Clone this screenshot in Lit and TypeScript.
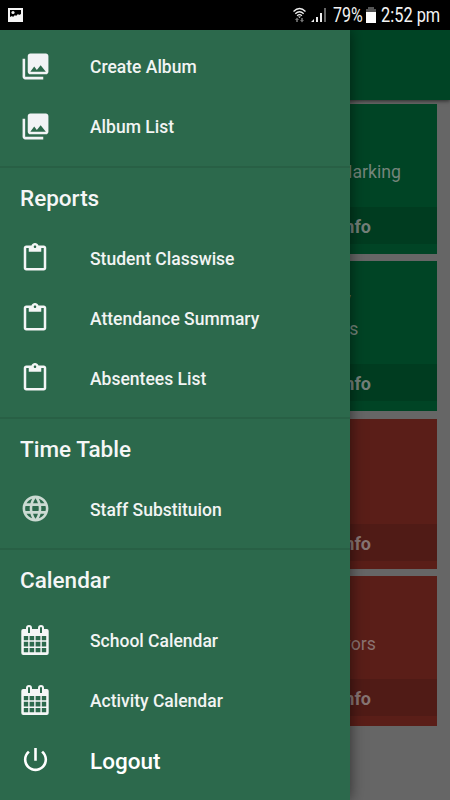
import { LitElement, html, css, svg } from "lit";
import { customElement } from "lit/decorators.js";

const icons = {
  album: svg`<svg class="icon" width="31" height="31" viewBox="0 0 24 24"><path fill="#f1f3f5" d="M22 16V4c0-1.1-.9-2-2-2H8c-1.1 0-2 .9-2 2v12c0 1.1.9 2 2 2h12c1.1 0 2-.9 2-2zm-11-4l2.03 2.71L16 11l4 5H8l3-4zM2 6v14c0 1.1.9 2 2 2h14v-2H4V6H2z"/></svg>`,
  clip: svg`<svg class="icon" width="30" height="30" viewBox="0 0 24 24"><path fill="#f4f5f6" d="M19 2h-4.18C14.4.84 13.3 0 12 0c-1.300 0-2.400.84-2.820 2H5c-1.100 0-2 .9-2 2v16c0 1.100.9 2 2 2h14c1.100 0 2-.9 2-2V4c0-1.100-.9-2-2-2zm-7 0c.55 0 1 .45 1 1s-.45 1-1 1-1-.45-1-1 .45-1 1-1zm7 18H5V4h2v3h10V4h2v16z"/></svg>`,
  globe: svg`<svg class="icon" width="31" height="31" viewBox="0 0 24 24"><path fill="#cbdad2" d="M11.990 2C6.470 2 2 6.480 2 12s4.470 10 9.990 10C17.520 22 22 17.520 22 12S17.520 2 11.990 2zm6.930 6h-2.950c-.320-1.250-.780-2.450-1.380-3.560 1.840.63 3.370 1.910 4.330 3.560zM12 4.040c.83 1.200 1.480 2.530 1.910 3.960h-3.820c.43-1.430 1.080-2.760 1.910-3.960zM4.260 14C4.100 13.360 4 12.690 4 12s.1-1.360.26-2h3.380c-.08.66-.14 1.320-.14 2s.06 1.340.14 2H4.260zm.82 2h2.950c.32 1.250.78 2.450 1.380 3.560-1.840-.63-3.370-1.900-4.330-3.560zm2.950-8H5.080c.96-1.660 2.490-2.930 4.330-3.560C8.810 5.550 8.350 6.750 8.030 8zM12 19.960c-.83-1.200-1.480-2.530-1.910-3.960h3.820c-.43 1.430-1.080 2.760-1.910 3.960zM14.340 14H9.660c-.09-.66-.16-1.320-.16-2s.07-1.350.16-2h4.680c.09.65.16 1.320.16 2s-.07 1.340-.16 2zm.25 5.560c.6-1.110 1.060-2.310 1.380-3.560h2.950c-.96 1.650-2.490 2.930-4.330 3.560zM16.360 14c.08-.66.14-1.320.14-2s-.06-1.340-.14-2h3.380c.16.64.26 1.310.26 2s-.1 1.360-.26 2h-3.380z"/></svg>`,
  calendar: svg`<svg class="icon" width="28" height="30" viewBox="0 0 28 30"><path fill="#f5f6f6" fill-rule="evenodd" d="M2.500 4H5V3a3 3 0 0 1 6 0v1h6V3a3 3 0 0 1 6 0v1h2.500A2 2 0 0 1 27.700 6v22a2 2 0 0 1-2 2H2.300a2 2 0 0 1-2-2V6a2 2 0 0 1 2.200-2zM7 3v5h2V3a1 1 0 0 0-2 0zM19 3v5h2V3a1 1 0 0 0-2 0zM2.800 11v4.300h4.400V11zM8.600 11v4.300h4.600V11zM14.600 11v4.300h4.800V11zM20.800 11v4.300h4.400V11zM2.800 16.800v4.600h4.400v-4.600zM8.600 16.800v4.600h4.600v-4.600zM14.600 16.800v4.600h4.800v-4.600zM20.800 16.800v4.600h4.400v-4.600zM2.800 23v4.300h4.400V23zM8.600 23v4.300h4.600V23zM14.600 23v4.300h4.800V23zM20.800 23v4.300h4.400V23z"/></svg>`,
  power: svg`<svg class="icon" width="31" height="31" viewBox="0 0 24 24"><path fill="#fff" d="M13 3h-2v10h2V3zm4.830 2.170l-1.420 1.420C17.990 7.860 19 9.810 19 12c0 3.870-3.130 7-7 7s-7-3.130-7-7c0-2.190 1.010-4.140 2.580-5.420L6.170 5.170C4.230 6.820 3 9.260 3 12c0 4.970 4.030 9 9 9s9-4.030 9-9c0-2.740-1.230-5.180-3.170-6.830z"/></svg>`,
};

type IconName = keyof typeof icons;

const sections: { title?: string; items: [IconName, string][] }[] = [
  { items: [["album", "Create Album"], ["album", "Album List"]] },
  { title: "Reports", items: [["clip", "Student Classwise"], ["clip", "Attendance Summary"], ["clip", "Absentees List"]] },
  { title: "Time Table", items: [["globe", "Staff Substituion"]] },
  { title: "Calendar", items: [["calendar", "School Calendar"], ["calendar", "Activity Calendar"], ["power", "Logout"]] },
];

@customElement("app-root")
export class AppRoot extends LitElement {
  static styles = css`
    :host { display: block; width: 450px; height: 800px; overflow: hidden; position: relative; background: #666; font-family: Roboto, "Liberation Sans", sans-serif; }
    .status { height: 30px; background: #000; display: flex; align-items: center; color: #f4f4f4; }
    .photo { margin-left: 8px; flex: none; }
    .right { margin-left: auto; display: flex; align-items: center; height: 30px; }
    .wifi { margin-right: 5px; }
    .signal { margin-right: 6px; }
    .pct, .time { font-size: 19.500px; line-height: 30px; padding-top: 2px; white-space: nowrap; transform-origin: 0 50%; }
    .pct { width: 33px; transform: scaleX(.82); }
    .time { width: 69px; transform: scaleX(.84); }
    .battery { margin-right: 5px; }
    .appbar { height: 70px; background: #004425; box-shadow: 0 1px 4px rgba(0,0,0,.6); }
    .cards { display: flex; flex-direction: column; gap: 7.400px; padding: 4px 13px 0 0; align-items: flex-end; }
    .card { width: 208px; height: 150px; background: #004425; color: #74847b; display: flex; flex-direction: column; }
    .red { background: #5a1e18; color: #8b7371; }
    .label { height: 103px; box-sizing: border-box; display: flex; flex-direction: column; justify-content: flex-end; font-size: 17.700px; line-height: 30px; }
    .label:empty { height: 105px; }
    .line { text-align: right; white-space: nowrap; }
    .l0 { padding: 0 36px 20px 0; }
    .l1 { padding: 0 78.500px 20px 0; }
    .l1a { padding: 0 86px 0 0; }
    .l3 { padding: 0 61px 20px 0; }
    .foot { height: 37px; line-height: 39px; background: #003c20; font-weight: 700; font-size: 18px; padding-right: 66px; text-align: right; color: #74807a; }
    .red .foot { background: #501b16; color: #877573; }
    .drawer { position: absolute; left: 0; top: 30px; width: 350px; height: 770px; box-sizing: border-box; padding-top: 7px; background: #2c694c; box-shadow: 0 0 14px rgba(0,0,0,.55); clip-path: inset(0 -20px 0 0); }
    .section { padding-bottom: 9px; border-bottom: 2px solid #286045; }
    .section:last-child { border: 0; }
    .head { height: 60px; line-height: 61px; padding-left: 20px; color: #f5f6f6; font-size: 22.500px; font-weight: 500; }
    .item { height: 60px; display: grid; grid-template-columns: 70px 1fr; padding-left: 20px; align-items: center; color: #f2f4f3; font-size: 17.500px; font-weight: 500; }
    .slot { width: 30px; display: flex; justify-content: center; padding-bottom: 1px; }
    .section:not(:first-child) .name { padding-top: 1px; }
    .icon { display: block; flex: none; }
    .logout { font-size: 22.500px; color: #fff; }
  `;

  card(lines: [string, string][], red = false) {
    return html`<div class="card ${red ? "red" : ""}">${lines.length
      ? html`<div class="label">${lines.map(([c, t]) => html`<div class="line ${c}">${t}</div>`)}</div>`
      : html`<div class="label"></div>`}<div class="foot">More Info</div></div>`;
  }

  render() {
    return html`
      <div class="status">
        <svg class="photo" width="15" height="15" viewBox="0 0 15 15"><path fill="#f5f5f5" fill-rule="evenodd" d="M0 0h15v14H0zM2 2v7l2-1 1 1 2-2 1 1 2-2 1 1 2-1V2z"/><circle cx="5" cy="4.500" r="1.600" fill="#eee"/></svg>
        <div class="right">
          <svg class="wifi" width="13" height="17" viewBox="0 0 13 17"><g fill="none" stroke="#eee" stroke-width="1.300"><path d="M.5 4.500Q6.500-1.500 12.500 4.500M2.300 6.700q4.200-4 8.400 0M4.100 8.700q2.400-2.200 4.800 0"/></g><path fill="#eee" d="M5 9.500h3L6.500 11z"/><path fill="#777" d="M4 10.500l2 2.500H4.800v2H3.200v-2H2zM9 15.500L7 13h1.200v-2h1.600v2H11z"/></svg>
          <svg class="signal" width="16" height="16" viewBox="0 0 16 16"><path fill="#eee" d="M0 15l3-3v3zM5 10h2v5H5zM9 6h2v9H9z"/><path fill="#666" d="M13 1h2v14h-2z"/></svg>
          <span class="pct">79%</span>
          <svg class="battery" width="10" height="16" viewBox="0 0 10 16"><path fill="#555" d="M2 0h6v2h2v3H0V2h2z"/><path fill="#fff" d="M0 5h10v11H0z"/></svg>
          <span class="time">2:52 pm</span>
        </div>
      </div>
      <div class="appbar"></div>
      <div class="cards">
        ${this.card([["l0", "Attendance Marking"]])}
        ${this.card([["l1a", "Activity"], ["l1", "Details"]])}
        ${this.card([], true)}
        ${this.card([["l3", "Survivors"]], true)}
      </div>
      <div class="drawer">
        ${sections.map((s) => html`<div class="section">
          ${s.title ? html`<div class="head">${s.title}</div>` : ""}
          ${s.items.map(([i, t]) => html`<div class="item ${t === "Logout" ? "logout" : ""}"><span class="slot">${icons[i]}</span><span class="name">${t}</span></div>`)}
        </div>`)}
      </div>`;
  }
}
